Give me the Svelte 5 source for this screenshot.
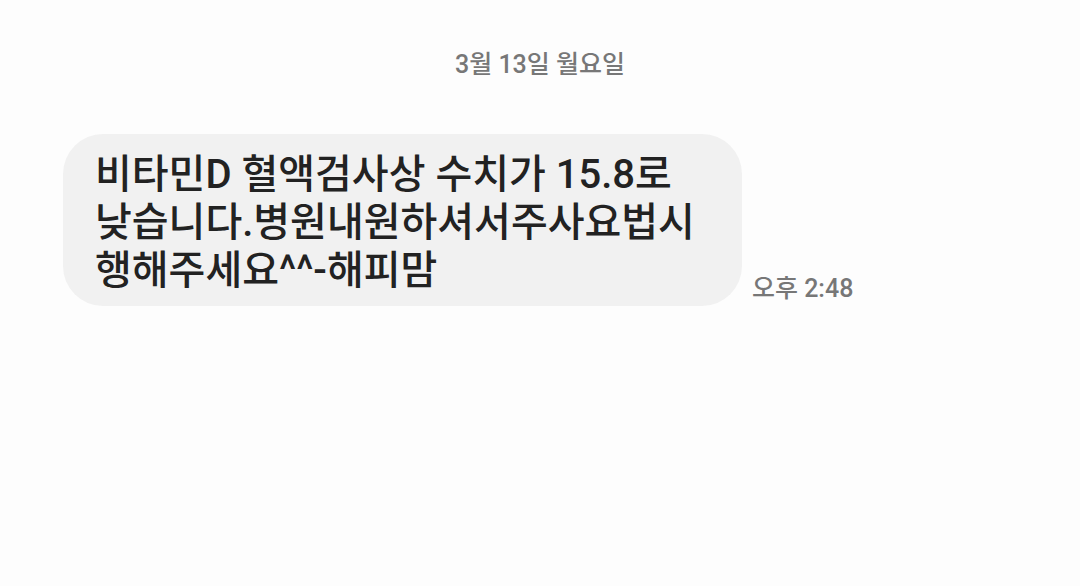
<script>
  const lines = [
    '비타민D 혈액검사상 수치가 15.8로',
    '낮습니다.병원내원하셔서주사요법시',
    '행해주세요^^-해피맘'
  ];
</script>

<main>
  <h1 class="date">3월 13일 월요일</h1>
  <article class="message">
    <p class="bubble">
      {#each lines as line}
        <span>{line}</span>
      {/each}
    </p>
    <time datetime="14:48">오후 2:48</time>
  </article>
</main>

<style>
  :global(body) {
    margin: 0;
    background: #fdfdfd;
  }
  main {
    padding: 47px 63px;
    font-family: Roboto, "Noto Sans CJK KR", sans-serif;
  }
  .date {
    margin: 0 0 51px;
    text-align: center;
    font-size: 25px;
    line-height: 36px;
    font-weight: 500;
    color: #777;
  }
  .message {
    display: flex;
    align-items: flex-end;
    gap: 10px;
  }
  .bubble {
    margin: 0;
    padding: 17px 47px 11px 32px;
    border-radius: 40px;
    background: #f1f1f1;
    color: #222;
    font-size: 40px;
    line-height: 48px;
    font-weight: 500;
  }
  .bubble span {
    display: block;
    white-space: nowrap;
  }
  time {
    font-size: 25px;
    line-height: 34px;
    font-weight: 500;
    color: #777;
    white-space: nowrap;
  }
</style>
